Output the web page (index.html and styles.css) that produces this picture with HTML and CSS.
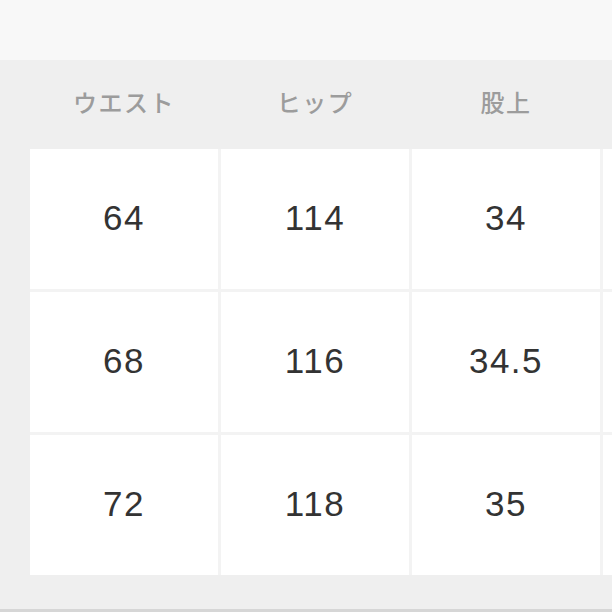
FILE: index.html
```html
<!DOCTYPE html>
<html lang="ja">
<head>
<meta charset="utf-8">
<link rel="stylesheet" href="styles.css">
</head>
<body>
<div class="topbar"></div>
<div class="table">
  <div class="head-row">
    <div class="head">ウエスト</div>
    <div class="head">ヒップ</div>
    <div class="head">股上</div>
    <div class="head"></div>
  </div>
  <div class="grid">
    <div class="cell">64</div><div class="cell">114</div><div class="cell">34</div><div class="cell"></div>
    <div class="cell">68</div><div class="cell">116</div><div class="cell">34.5</div><div class="cell"></div>
    <div class="cell">72</div><div class="cell">118</div><div class="cell">35</div><div class="cell"></div>
  </div>
</div>
<div class="bottom"></div>
</body>
</html>
```
FILE: styles.css
```css
html, body {
  margin: 0;
  padding: 0;
  width: 612px;
  height: 612px;
  overflow: hidden;
  background: #efefef;
}
.topbar {
  height: 60px;
  background: #f8f8f8;
}
.table {
  padding-left: 30px;
  width: 800px;
}
.head-row {
  display: grid;
  grid-template-columns: repeat(4, 188px);
  column-gap: 3px;
  height: 89px;
}
.head {
  display: flex;
  align-items: center;
  justify-content: center;
  padding-bottom: 6px;
  box-sizing: border-box;
  font-family: "Noto Sans CJK JP", sans-serif;
  font-size: 24px;
  font-weight: 500;
  color: #9c9c9c;
  letter-spacing: 1.5px;
}
.grid {
  display: grid;
  grid-template-columns: repeat(4, 188px);
  grid-auto-rows: 140px;
  gap: 3px;
  background: #f3f3f3;
}
.cell {
  background: #ffffff;
  display: flex;
  align-items: center;
  justify-content: center;
  font-family: "Liberation Sans", Arial, sans-serif;
  font-size: 35px;
  color: #333333;
  letter-spacing: 1.5px;
  padding-bottom: 3px;
  box-sizing: border-box;
}
.bottom {
  height: 34px;
  border-bottom: 3px solid #d6d6d6;
}
```
